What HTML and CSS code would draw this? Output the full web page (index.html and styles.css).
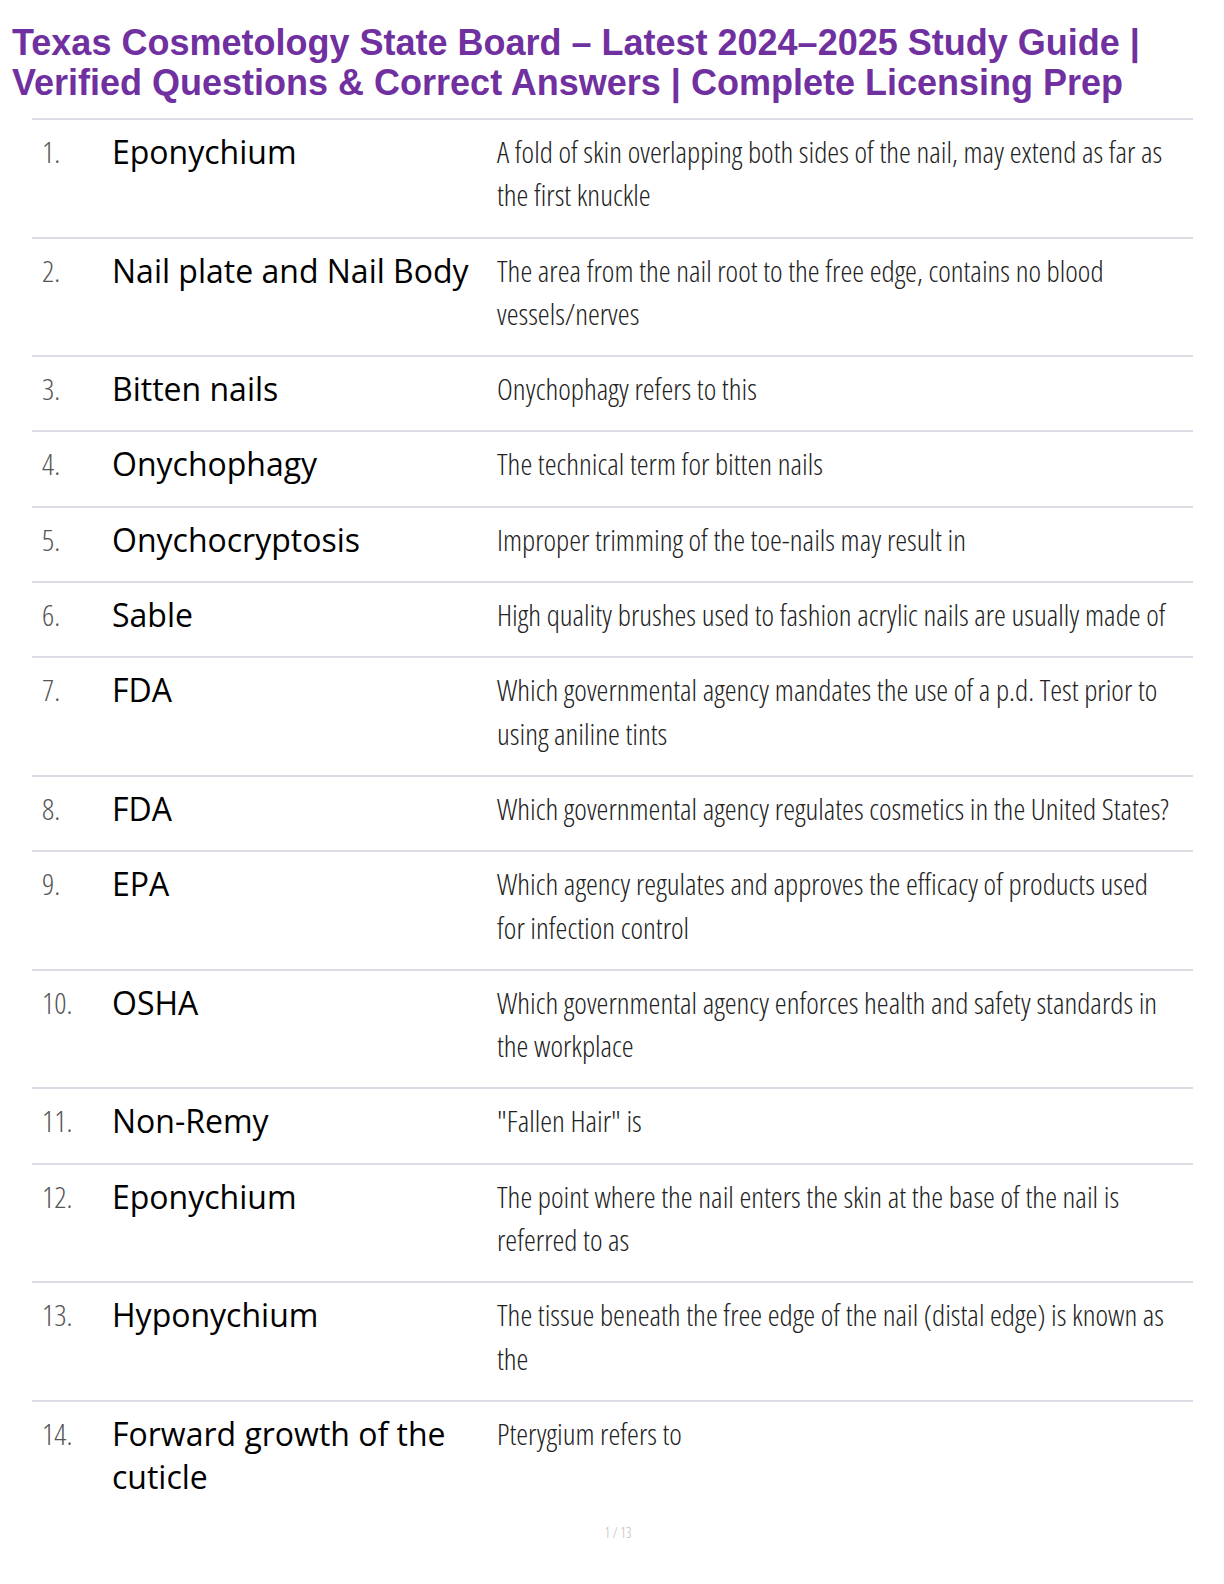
FILE: index.html
```html
<!DOCTYPE html>
<html>
<head>
<meta charset="utf-8">
<link rel="stylesheet" href="styles.css">
</head>
<body>
<div class="page">
  <h1 class="title">Texas Cosmetology State Board – Latest 2024–2025 Study Guide |<br>Verified Questions &amp; Correct Answers | Complete Licensing Prep</h1>
  <div class="list">
    <div class="row"><div class="num">1.</div><div class="term">Eponychium</div><div class="ans">A fold of skin overlapping both sides of the nail, may extend as far as the first knuckle</div></div>
    <div class="row"><div class="num">2.</div><div class="term">Nail plate and Nail Body</div><div class="ans">The area from the nail root to the free edge, contains no blood vessels/nerves</div></div>
    <div class="row"><div class="num">3.</div><div class="term">Bitten nails</div><div class="ans">Onychophagy refers to this</div></div>
    <div class="row"><div class="num">4.</div><div class="term">Onychophagy</div><div class="ans">The technical term for bitten nails</div></div>
    <div class="row"><div class="num">5.</div><div class="term">Onychocryptosis</div><div class="ans">Improper trimming of the toe-nails may result in</div></div>
    <div class="row"><div class="num">6.</div><div class="term">Sable</div><div class="ans">High quality brushes used to fashion acrylic nails are usually made of</div></div>
    <div class="row"><div class="num">7.</div><div class="term">FDA</div><div class="ans">Which governmental agency mandates the use of a p.d. Test prior to using aniline tints</div></div>
    <div class="row"><div class="num">8.</div><div class="term">FDA</div><div class="ans">Which governmental agency regulates cosmetics in the United States?</div></div>
    <div class="row"><div class="num">9.</div><div class="term">EPA</div><div class="ans">Which agency regulates and approves the efficacy of products used for infection control</div></div>
    <div class="row"><div class="num">10.</div><div class="term">OSHA</div><div class="ans">Which governmental agency enforces health and safety standards in the workplace</div></div>
    <div class="row"><div class="num">11.</div><div class="term">Non-Remy</div><div class="ans">"Fallen Hair" is</div></div>
    <div class="row"><div class="num">12.</div><div class="term">Eponychium</div><div class="ans">The point where the nail enters the skin at the base of the nail is referred to as</div></div>
    <div class="row"><div class="num">13.</div><div class="term">Hyponychium</div><div class="ans">The tissue beneath the free edge of the nail (distal edge) is known as the</div></div>
    <div class="row last"><div class="num">14.</div><div class="term">Forward growth of the cuticle</div><div class="ans">Pterygium refers to</div></div>
  </div>
  <div class="footer">1 / 13</div>
</div>
</body>
</html>
```
FILE: styles.css
```css
html, body {
  margin: 0;
  padding: 0;
  background: #ffffff;
}
.page {
  width: 1224px;
  padding: 23px 0 0 12px;
  box-sizing: border-box;
}
.title {
  margin: 0;
  font-family: "Liberation Sans", Arial, sans-serif;
  font-weight: 700;
  font-size: 36px;
  line-height: 40px;
  color: #7030a0;
}
.list {
  margin: 15px 0 0 20px;
  width: 1161px;
}
.row {
  display: grid;
  grid-template-columns: 80px 385px 1fr;
  border-top: 2px solid #dcdce4;
  padding: 10px 0 20px 0;
  line-height: 43.3px;
}
.num {
  padding-left: 10px;
  font-family: "Open Sans", sans-serif;
  font-weight: 300;
  font-stretch: 76%;
  font-size: 30px;
  color: #555555;
}
.term {
  font-family: "Open Sans", sans-serif;
  font-weight: 400;
  font-size: 32px;
  color: #000000;
}
.ans {
  font-family: "Open Sans", sans-serif;
  font-weight: 300;
  font-stretch: 77%;
  font-size: 30px;
  color: #222222;
  padding-right: 14px;
}
.footer {
  margin-top: 4px;
  text-align: center;
  font-family: "Open Sans", sans-serif;
  font-weight: 300;
  font-stretch: 75%;
  font-size: 14px;
  color: #bbbbbb;
}
```
